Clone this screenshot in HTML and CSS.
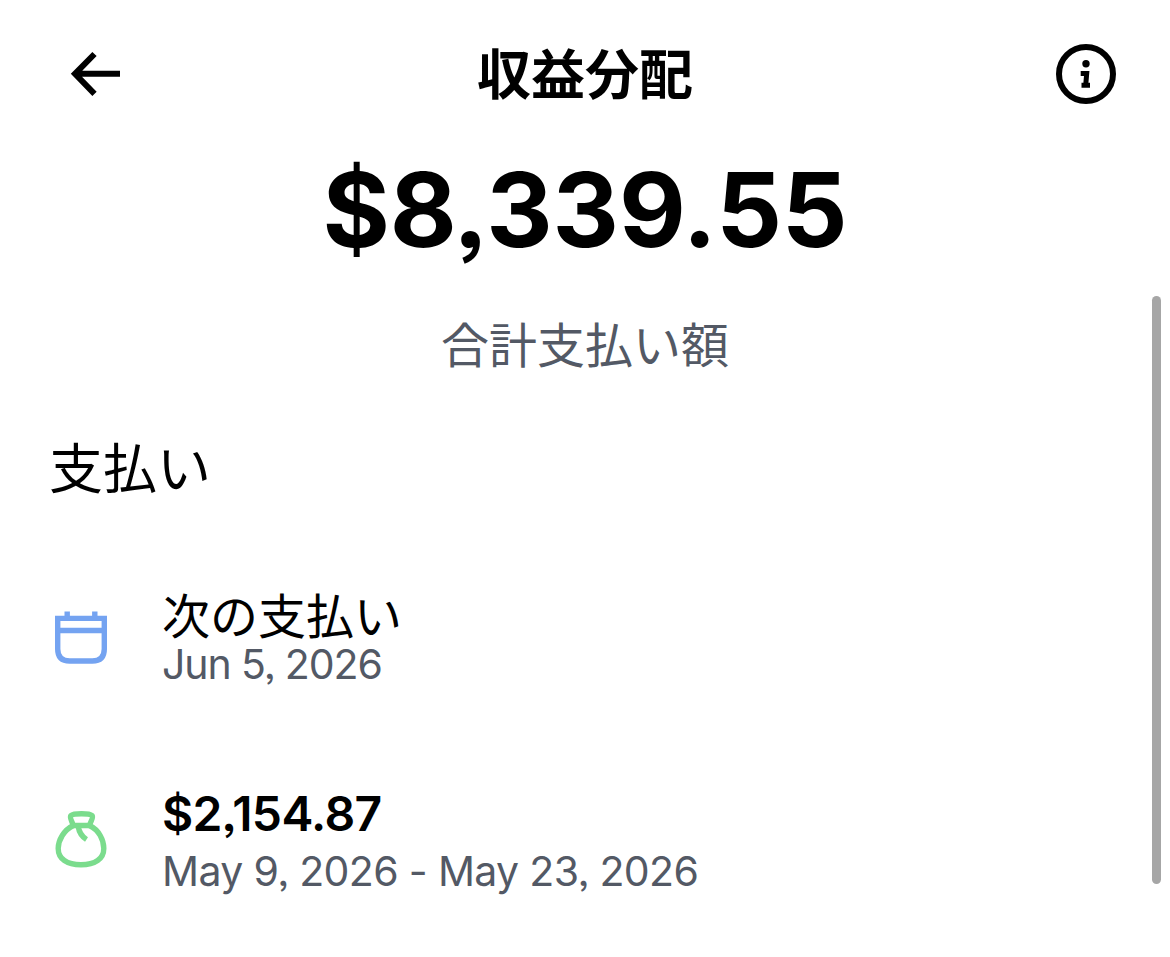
FILE: index.html
```html
<!DOCTYPE html>
<html lang="ja">
<head>
  <meta charset="UTF-8">
  <meta name="viewport" content="width=device-width, initial-scale=1.0">
  <title>収益分配</title>
  <link rel="stylesheet" href="styles.css">
</head>
<body>
  <header class="header">
    <svg class="back-icon" viewBox="0 0 52 48" fill="none" stroke="#000" stroke-width="6">
      <path d="M25.500 4L6 23.800l19.500 20M5 23.800h46"/>
    </svg>
    <h1>収益分配</h1>
    <svg class="info-icon" viewBox="0 0 60 60" fill="none" stroke="#000">
      <circle cx="30" cy="30" r="27" stroke-width="6"/>
      <circle cx="30" cy="19.700" r="3.700" fill="#000" stroke="none"/>
      <path d="M24.700 29.500h6l-1 11.700h4.300M25.500 41.200h5" stroke-width="5"/>
    </svg>
  </header>

  <section class="total">
    <div class="total-amount">$8,339.55</div>
    <div class="total-label">合計支払い額</div>
  </section>

  <main class="payouts">
    <h2>支払い</h2>
    <div class="payout next">
      <svg class="payout-icon" viewBox="0 0 56 60" fill="none" stroke="#74a3f1" stroke-width="5.400">
        <path d="M4.700 11.400h46.600v30.600q0 12-12 12h-22.600q-12 0-12-12zM4.700 23.500h46.600M14.200 4.500v6M41.800 4.500v6"/>
      </svg>
      <div class="payout-text">
        <div class="payout-title">次の支払い</div>
        <div class="payout-date">Jun 5, 2026</div>
      </div>
    </div>
    <div class="payout paid">
      <svg class="payout-icon" viewBox="0 0 56 60" fill="none" stroke="#7bdc8d" stroke-width="5.400" stroke-linejoin="round">
        <path d="M20.300 16.500C19 12 16 8.500 18 6.500Q20 4.700 28.500 4.700T39 6.500C41 8.500 37.500 12 36.500 16.500z"/>
        <path d="M20.300 16.500C11 21 5.200 31 5.200 39.500C5.200 50 14 55.800 28 55.800S50.800 50 50.800 39.500C50.800 31 46 21 36.500 16.500M25.200 17.500Q26.500 26 33.500 30.500"/>
      </svg>
      <div class="payout-text">
        <div class="payout-title amount">$2,154.87</div>
        <div class="payout-date">May 9, 2026 - May 23, 2026</div>
      </div>
    </div>
  </main>

  <div class="scrollbar"></div>
</body>
</html>
```

FILE: styles.css
```css
* {
  box-sizing: border-box;
}
body {
  margin: 0;
  height: 957px;
  overflow: hidden;
  background-color: #fff;
  color: #000;
  font-family: Inter, "Noto Sans CJK JP", sans-serif;
  font-feature-settings: "ss03";
}
.header {
  display: grid;
  grid-template-columns: 1fr auto 1fr;
  align-items: center;
  height: 148px;
  padding: 0 54px;
}
.back-icon {
  width: 52px;
  height: 48px;
  margin-left: 15px;
}
.info-icon {
  width: 60px;
  height: 60px;
  justify-self: end;
}
h1 {
  margin: 0;
  padding-top: 4px;
  font-size: 54px;
  line-height: 80px;
  font-weight: 700;
}
.total {
  text-align: center;
}
.total-amount {
  height: 124px;
  font-size: 103px;
  line-height: 124px;
  font-weight: 700;
  letter-spacing: -0.2px;
}
.total-label {
  margin-top: 38px;
  font-size: 48px;
  line-height: 72px;
  color: #535965;
}
.payouts {
  padding: 0 49px;
}
h2 {
  margin: 48px 0 0;
  font-size: 54px;
  line-height: 80px;
  font-weight: 400;
}
.payout {
  display: flex;
  align-items: center;
}
.next {
  margin-top: 80px;
}
.paid {
  margin-top: 103px;
}
.payout-icon {
  width: 56px;
  height: 60px;
  margin: 0 53px 0 4px;
}
.paid .payout-icon {
  margin-bottom: 10px;
}
.payout-title {
  font-size: 48px;
  line-height: 54px;
}
.payout-title.amount {
  font-weight: 600;
  letter-spacing: -0.65px;
}
.payout-date {
  font-size: 41px;
  line-height: 40px;
  letter-spacing: -1.1px;
  color: #535965;
}
.paid .payout-date {
  line-height: 60px;
  letter-spacing: -0.65px;
}
.scrollbar {
  position: absolute;
  top: 296px;
  right: 9px;
  width: 9px;
  height: 588px;
  border-radius: 5px;
  background-color: #a6a6a6;
}
```
